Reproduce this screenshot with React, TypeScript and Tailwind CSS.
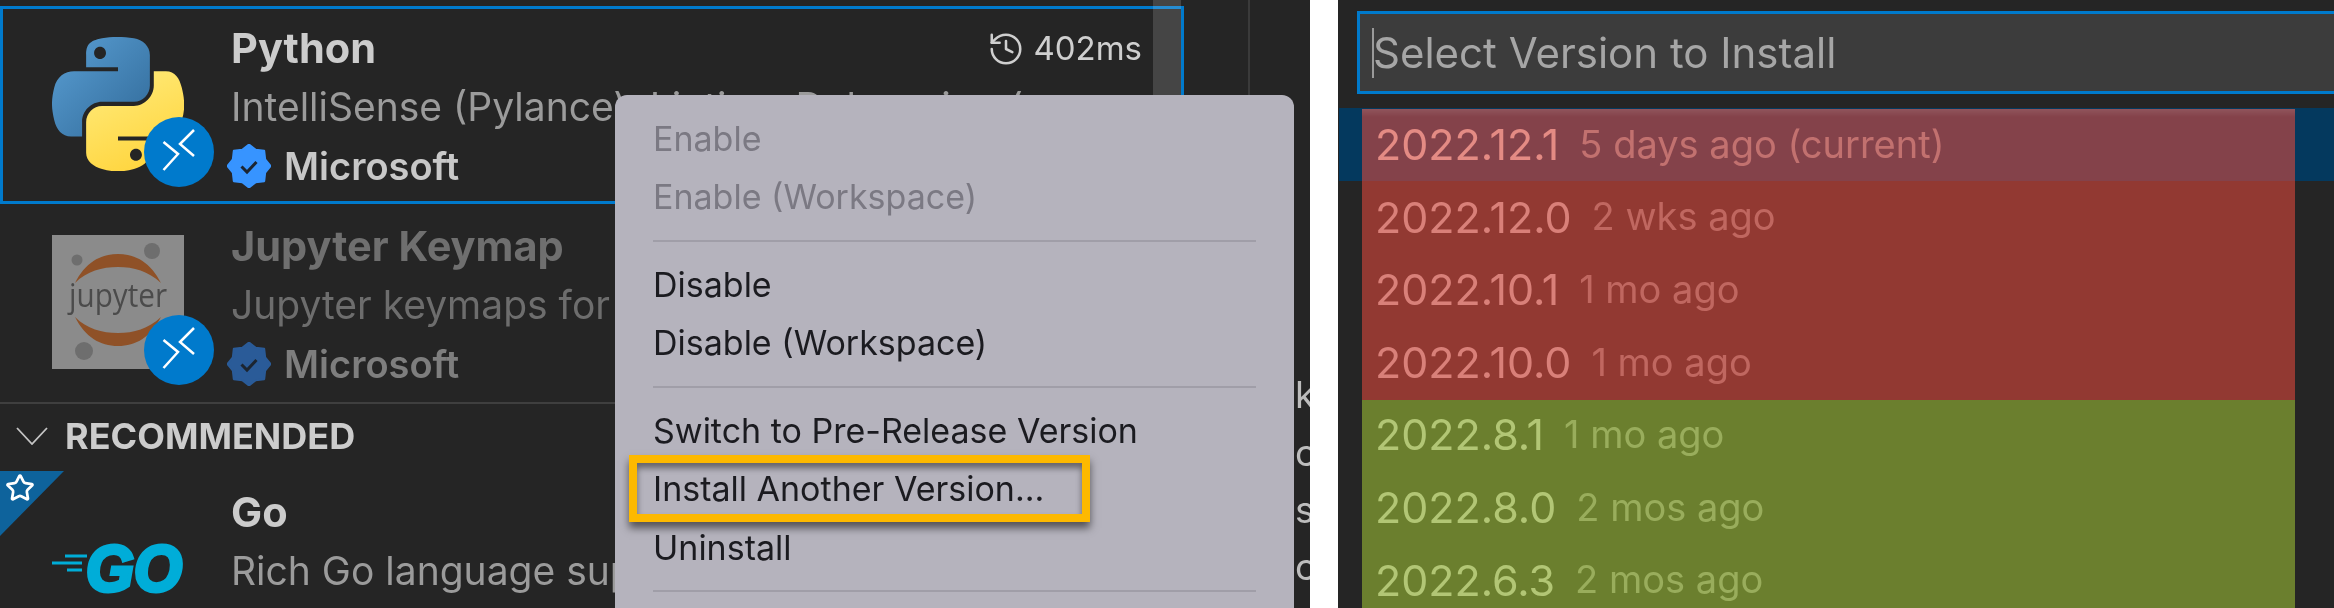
import { ReactNode } from 'react';
import { History, Star } from 'lucide-react';

const burst = Array.from({ length: 16 }, (_, i) => {
  const r = i % 2 === 0 ? 21.5 : 17.5;
  const a = (i * Math.PI) / 8 - Math.PI / 2;
  return `${22 + r * Math.cos(a)},${22 + r * Math.sin(a)}`;
}).join(' ');

const VerifiedBadge = ({ fill }: { fill: string }) => (
  <svg width="44" height="44" viewBox="0 0 44 44" className="shrink-0">
    <polygon points={burst} fill={fill} stroke={fill} strokeWidth="2" strokeLinejoin="round" />
    <path d="M14.5 22.5l5.5 5.5 9.5-10" fill="none" stroke="#1c2530" strokeWidth="3" />
  </svg>
);

const RemoteBadge = () => (
  <div className="absolute left-[92px] top-[80px] w-[70px] h-[70px] rounded-full bg-[#007acc]">
    <svg width="70" height="70" viewBox="-35 -35 70 70">
      <path d="M-15.5-10L-1 2-15.5 18" fill="none" stroke="#fff" strokeWidth="2.5" />
      <path d="M15-22L1-8 15 4" fill="none" stroke="#fff" strokeWidth="2.5" />
    </svg>
  </div>
);

const PythonLogo = () => (
  <svg width="132" height="134" viewBox="0 0 111 112" preserveAspectRatio="none">
    <defs>
      <linearGradient id="pyBlue" x1="0" y1="0" x2="1" y2="1">
        <stop offset="0" stopColor="#5a9fd4" />
        <stop offset="1" stopColor="#306998" />
      </linearGradient>
      <linearGradient id="pyYellow" x1="0.3" y1="0.1" x2="0.7" y2="1">
        <stop offset="0" stopColor="#ffe873" />
        <stop offset="1" stopColor="#ffd43b" />
      </linearGradient>
    </defs>
    <path
      fill="url(#pyBlue)"
      fillRule="evenodd"
      d="M54.9 0C50.3 0 46 .4 42.1 1.1 30.8 3.1 28.7 7.3 28.7 15v10.3h26.8v3.4H18.6C10.8 28.7 4 33.3 1.9 42.3-.6 52.5-.7 58.8 1.9 69.5c1.9 7.9 6.4 13.6 14.2 13.6h9.2V70.8c0-8.9 7.7-16.6 16.8-16.6h26.8c7.4 0 13.4-6.1 13.4-13.6V15c0-7.3-6.1-12.7-13.4-13.9C64.3.3 59.5 0 54.9 0zM40.4 8.2c2.8 0 5 2.3 5 5.1 0 2.8-2.3 5.1-5 5.1-2.8 0-5-2.3-5-5.1 0-2.8 2.2-5.1 5-5.1z"
    />
    <path
      fill="url(#pyYellow)"
      fillRule="evenodd"
      d="M85.6 28.7v11.9c0 9.2-7.8 17-16.7 17H42.1c-7.3 0-13.4 6.3-13.4 13.6v25.5c0 7.3 6.3 11.5 13.4 13.6 8.5 2.5 16.7 2.9 26.8 0 6.7-2 13.4-5.9 13.4-13.6V86.5H55.5v-3.4h40.2c7.8 0 10.7-5.4 13.4-13.6 2.8-8.4 2.7-16.5 0-27.2-1.9-7.8-5.6-13.6-13.4-13.6zM70.6 93.3c2.8 0 5 2.3 5 5.1 0 2.8-2.3 5.1-5 5.1-2.8 0-5-2.3-5-5.1 0-2.8 2.2-5.1 5-5.1z"
    />
  </svg>
);

const JupyterLogo = () => (
  <svg width="132" height="134" viewBox="0 0 132 134">
    <rect width="132" height="134" fill="#8b8b8b" />
    <circle cx="100" cy="16" r="8" fill="#6e6e6e" />
    <circle cx="25" cy="25" r="5.5" fill="#6e6e6e" />
    <circle cx="32" cy="116" r="9" fill="#6e6e6e" />
    <path d="M23 48C33 28 48 19 66 19s33 9 43 29C96 36 82 32 66 32s-31 4-43 16z" fill="#8f5127" />
    <path d="M23 82C33 102 48 111 66 111s33-9 43-29C96 94 82 98 66 98s-31-4-43-16z" fill="#8f5127" />
    <text x="17" y="72" fontSize="32" fontFamily="'Open Sans', sans-serif" fill="#4b4b4b" textLength="98" lengthAdjust="spacingAndGlyphs">
      jupyter
    </text>
  </svg>
);

const GoLogo = () => (
  <svg width="132" height="134" viewBox="0 0 132 134">
    <path d="M13 55h22M0 62h30M15 69h15" stroke="#00add8" strokeWidth="3" fill="none" />
    <text
      x="34"
      y="90"
      fontSize="64"
      fontWeight="700"
      fontStyle="italic"
      fontFamily="'Liberation Sans', sans-serif"
      fill="#00add8"
      stroke="#00add8"
      strokeWidth="4"
      textLength="96"
      lengthAdjust="spacingAndGlyphs"
    >
      GO
    </text>
  </svg>
);

interface RowProps {
  icon: ReactNode;
  title: string;
  desc: string;
  publisher?: string;
  badge?: string;
  meta?: boolean;
  selected?: boolean;
  titleClass: string;
  descClass: string;
  pubClass?: string;
}

const ExtensionRow = ({ icon, title, desc, publisher, badge, meta, selected, titleClass, descClass, pubClass }: RowProps) => (
  <div className={`flex h-[198px] pt-[28px] pl-[49px] border-[3px] ${selected ? 'border-[#007acc]' : 'border-transparent'}`}>
    <div className="relative w-[132px] h-[134px] shrink-0">
      {icon}
      {publisher && <RemoteBadge />}
    </div>
    <div className="ml-[47px] -mt-[18px] w-[900px] min-w-0">
      <div className="flex items-center justify-between h-[59px]">
        <span className={`text-[41.5px] font-bold ${titleClass}`}>{title}</span>
        {meta && (
          <span className="flex items-center gap-[8px] mr-[-11px] text-[#cfcfcf] text-[33px]">
            <History size={38} strokeWidth={1.6} />
            402ms
          </span>
        )}
      </div>
      <div className={`h-[59px] flex items-center whitespace-nowrap text-[39px] ${descClass}`}>{desc}</div>
      {publisher && (
        <div className={`h-[58px] flex items-center gap-[13px] -ml-[4px] text-[38px] font-semibold ${pubClass}`}>
          <VerifiedBadge fill={badge ?? '#3794ff'} />
          {publisher}
        </div>
      )}
    </div>
  </div>
);

const MenuItem = ({ label, disabled }: { label: string; disabled?: boolean }) => (
  <div className={`h-[58.5px] flex items-center px-[38px] whitespace-nowrap ${disabled ? 'text-[#7b7983]' : 'text-[#1b1b20]'}`}>{label}</div>
);

const MenuSeparator = () => (
  <div className="h-[29px] flex items-center px-[38px]">
    <div className="h-[2px] w-full bg-[#a09ea8]" />
  </div>
);

const ContextMenu = () => (
  <div className="absolute left-[615px] top-[95px] w-[679px] h-[530px] pt-[14px] rounded-[12px] bg-[#b5b3bd] text-[34px]">
    <MenuItem label="Enable" disabled />
    <MenuItem label="Enable (Workspace)" disabled />
    <MenuSeparator />
    <MenuItem label="Disable" />
    <MenuItem label="Disable (Workspace)" />
    <MenuSeparator />
    <MenuItem label="Switch to Pre-Release Version" />
    <div className="relative">
      <MenuItem label="Install Another Version..." />
      <div className="absolute left-[14px] top-[-5px] w-[461px] h-[67px] border-[8px] border-[#fdb900] shadow-[0_6px_8px_rgba(0,0,0,0.55),inset_0_5px_6px_rgba(0,0,0,0.45)]" />
    </div>
    <MenuItem label="Uninstall" />
    <MenuSeparator />
  </div>
);

const versions = [
  { v: '2022.12.1', age: '5 days ago (current)', selected: true },
  { v: '2022.12.0', age: '2 wks ago' },
  { v: '2022.10.1', age: '1 mo ago' },
  { v: '2022.10.0', age: '1 mo ago' },
  { v: '2022.8.1', age: '1 mo ago' },
  { v: '2022.8.0', age: '2 mos ago' },
  { v: '2022.6.3', age: '2 mos ago' },
];

const App = () => {
  return (
    <div className="flex w-[2334px] h-[608px] overflow-hidden bg-white font-['Inter',sans-serif] blur-[0.5px]">
      {/* left shot */}
      <div className="relative flex w-[1310px] h-full shrink-0 overflow-hidden bg-[#252525]">
        <div className="relative w-[1184px] shrink-0 pt-[6px]">
          <ExtensionRow
            selected
            meta
            icon={<PythonLogo />}
            title="Python"
            desc="IntelliSense (Pylance), Linting, Debugging ("
            publisher="Microsoft"
            titleClass="text-[#cccccc]"
            descClass="text-[#9b9b9b]"
            pubClass="text-[#c8c8c8]"
          />
          <ExtensionRow
            icon={<div className="w-[132px] h-[134px]"><JupyterLogo /></div>}
            title="Jupyter Keymap"
            desc="Jupyter keymaps for notebooks"
            publisher="Microsoft"
            badge="#2a5b98"
            titleClass="text-[#6f6f6f]"
            descClass="text-[#6d6d6d]"
            pubClass="text-[#7e7e7e]"
          />
          <div className="flex items-center h-[68px] border-t-[2px] border-[#3f3f3f] pl-[16px] pb-[2px]">
            <svg width="32" height="18" viewBox="0 0 32 18" fill="none" stroke="#c5c5c5" strokeWidth="1.8">
              <path d="M1 1l15 16L31 1" />
            </svg>
            <span className="ml-[17px] text-[36px] font-bold text-[#cccccc]">RECOMMENDED</span>
          </div>
          <ExtensionRow
            icon={<GoLogo />}
            title="Go"
            desc="Rich Go language support for Visual Studio Code"
            titleClass="text-[#cccccc]"
            descClass="text-[#9b9b9b]"
          />
          <svg className="absolute left-0 top-[471px]" width="64" height="65" viewBox="0 0 64 65">
            <polygon points="0,0 64,0 0,65" fill="#0e639c" />
          </svg>
          <Star className="absolute left-[5px] top-[473px]" size={30} color="#fff" strokeWidth={2.2} />
          <div className="absolute left-[1153px] top-0 w-[28px] h-[100px] bg-white/15" />
        </div>
        <div className="w-[66px] shrink-0 border-r-[2px] border-[#3a3a3a]" />
        <div className="flex-1 pl-[45px] pt-[366px] text-[37px] text-[#bdbdbd] whitespace-nowrap">
          <div className="h-[58px] flex items-center">kernel</div>
          <div className="h-[57px] flex items-center">c</div>
          <div className="h-[57px] flex items-center">s</div>
          <div className="h-[57px] flex items-center">c</div>
        </div>
        <ContextMenu />
      </div>

      <div className="w-[28px] shrink-0" />

      {/* right shot */}
      <div className="relative flex-1 min-w-0 overflow-hidden bg-[#252525] pt-[11px]">
        <div className="flex items-center h-[83px] w-[1100px] ml-[19px] border-[3px] border-[#007acc] bg-[#3c3c3c] pl-[12px]">
          <span className="w-[2px] h-[50px] bg-[#9a9a9a] shrink-0" />
          <span className="-ml-[1px] text-[42px] text-[#a6a6a6]">Select Version to Install</span>
        </div>
        <div className="mt-[14px]">
          {versions.map((row) => (
            <div
              key={row.v}
              className={`flex items-center h-[72.6px] pl-[36px] ml-[1px] text-[43px] whitespace-nowrap ${row.selected ? 'bg-[#04395e] text-[#e6e6e6]' : 'text-[#cccccc]'}`}
            >
              <span>{row.v}</span>
              <span className="ml-[20px] text-[38px] opacity-65">{row.age}</span>
            </div>
          ))}
        </div>
        <div className="absolute left-[24px] top-[109px] w-[933px] h-[291px] bg-[rgba(226,73,61,0.58)]">
          <div className="h-[8px] bg-gradient-to-b from-white/10 to-transparent" />
        </div>
        <div className="absolute left-[24px] top-[400px] w-[933px] h-[208px] bg-[rgba(158,193,54,0.58)]" />
      </div>
    </div>
  );
};

export default App;
